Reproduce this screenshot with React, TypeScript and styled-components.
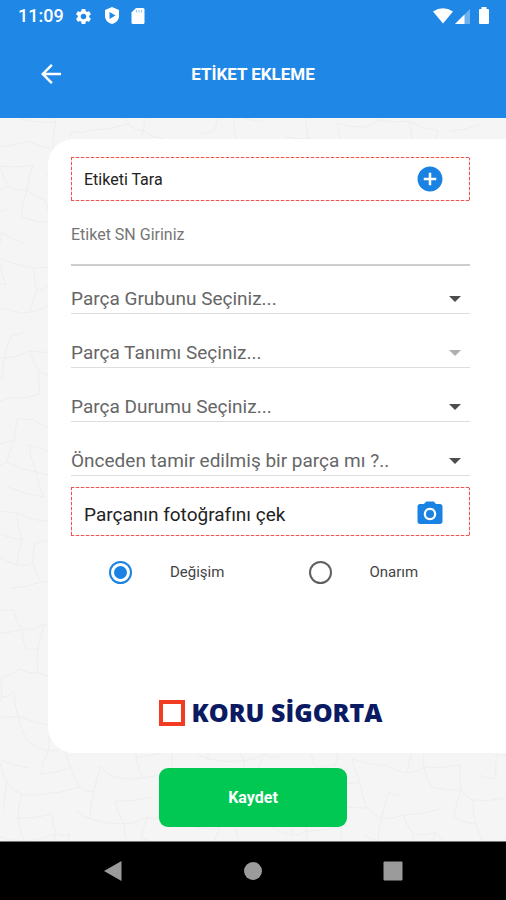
import React, { useState } from "react";
import styled, { createGlobalStyle } from "styled-components";
import { MdAddCircle, MdArrowBack, MdPhotoCamera, MdSettings } from "react-icons/md";

const GlobalStyle = createGlobalStyle`
  * { box-sizing: border-box; }
  body { margin: 0; background: #f5f5f5; }
  button, input, select { font-family: inherit; }
`;

const Screen = styled.div`
  min-height: 100vh;
  display: flex;
  flex-direction: column;
  font-family: Roboto, "Liberation Sans", sans-serif;
  background: #f5f5f5;
`;

const Header = styled.header`
  background: #1f87e6;
  color: #fff;
`;

const StatusBar = styled.div`
  display: flex;
  align-items: center;
  height: 32px;
  padding: 0 16px 0 18px;
`;

const Clock = styled.time`
  font-size: 18px;
  line-height: 24px;
  font-weight: 500;
  margin-right: 10px;
`;

const IconGroup = styled.div<{ $gap: number }>`
  display: flex;
  align-items: center;
  gap: ${(p) => p.$gap}px;
`;

const Spacer = styled.div`
  flex: 1;
`;

const AppBar = styled.div`
  display: grid;
  grid-template-columns: 1fr auto 1fr;
  align-items: center;
  height: 86px;
  padding: 0 36px 2px;
`;

const BackButton = styled.button`
  justify-self: start;
  display: flex;
  padding: 0;
  border: 0;
  background: none;
  color: inherit;
  cursor: pointer;
`;

const Title = styled.h1`
  margin: 0;
  font-size: 17px;
  line-height: 24px;
  font-weight: 700;
`;

const Main = styled.main`
  position: relative;
  flex: 1;
  display: flex;
  flex-direction: column;
  padding: 21px 0 14px;
`;

const Texture = styled.svg`
  position: absolute;
  inset: 0;
  width: 100%;
  height: 100%;
`;

const Card = styled.form`
  position: relative;
  flex: 1;
  display: flex;
  flex-direction: column;
  margin-left: 48px;
  padding: 18px 36px 27px 23px;
  border-radius: 26px 0 0 26px;
  background: #fff;
`;

const dash = "#f0524d 0 3px, #fbd0ce 3px 5px";

const ActionBox = styled.button<{ $tall?: boolean }>`
  display: flex;
  align-items: center;
  justify-content: space-between;
  width: 100%;
  height: ${(p) => (p.$tall ? 49 : 44)}px;
  padding: ${(p) => (p.$tall ? 5 : 0)}px 25px 0 13px;
  border: 0;
  background:
    repeating-linear-gradient(90deg, ${dash}) top / 100% 1px no-repeat,
    repeating-linear-gradient(90deg, ${dash}) bottom / 100% 1px no-repeat,
    repeating-linear-gradient(180deg, ${dash}) left / 1px 100% no-repeat,
    repeating-linear-gradient(180deg, ${dash}) right / 1px 100% no-repeat,
    #fff;
  color: #222;
  font-size: ${(p) => (p.$tall ? 19 : 16)}px;
  cursor: pointer;

  svg {
    color: #1a82e2;
  }
`;

const SerialInput = styled.input`
  width: 100%;
  height: 45px;
  margin-top: 20px;
  padding: 0 0 16px;
  border: 0;
  border-bottom: 2px solid #cdcdcd;
  border-radius: 0;
  outline: 0;
  background: none;
  color: #333;
  font-size: 16px;

  &::placeholder {
    color: #757575;
    opacity: 1;
  }
`;

const Fields = styled.div`
  display: flex;
  flex-direction: column;
  gap: 24px;
  margin: 18px 0 11px;
`;

const SelectField = styled.div`
  display: grid;
  align-items: center;
  height: 30px;
  border-bottom: 1px solid #dedede;

  > * {
    grid-area: 1 / 1;
  }
`;

const Select = styled.select`
  appearance: none;
  width: 100%;
  height: 29px;
  padding: 0 32px 0 0;
  border: 0;
  outline: 0;
  background: none;
  color: #666;
  font-size: 19px;
  opacity: 1;
`;

const Caret = styled.svg<{ $dim?: boolean }>`
  justify-self: end;
  margin-right: 9px;
  fill: ${(p) => (p.$dim ? "#b0b0b0" : "#4d4d4d")};
  pointer-events: none;
`;

const Choices = styled.fieldset`
  display: grid;
  grid-template-columns: 1fr 1fr;
  margin: 24px 0 48px;
  padding: 0;
  border: 0;
`;

const Choice = styled.label`
  display: flex;
  align-items: center;
  gap: 38px;
  padding-left: 38px;
  color: #444;
  font-size: 15px;
  line-height: 24px;
  cursor: pointer;
`;

const Radio = styled.input`
  appearance: none;
  display: grid;
  place-items: center;
  width: 23px;
  height: 23px;
  margin: 0;
  border: 2px solid #606060;
  border-radius: 50%;

  &:checked {
    border-color: #1a82e2;
  }

  &:checked::before {
    content: "";
    width: 13px;
    height: 13px;
    border-radius: 50%;
    background: #1a82e2;
  }
`;

const Brand = styled.div`
  display: flex;
  align-items: center;
  justify-content: center;
  gap: 7px;
  margin-top: auto;
  color: #0a1a63;
  font-family: "Open Sans", "Noto Sans", sans-serif;
  font-size: 25px;
  line-height: 27px;
  font-weight: 800;
  white-space: nowrap;
`;

const BrandMark = styled.span`
  width: 26px;
  height: 26px;
  border: 4px solid #f23c22;
`;

const SaveButton = styled.button`
  position: relative;
  align-self: center;
  width: 37%;
  height: 59px;
  margin-top: 15px;
  border: 0;
  border-radius: 9px;
  background: #00c853;
  color: #fff;
  font-size: 16px;
  font-weight: 700;
  cursor: pointer;
`;

const NavBar = styled.nav`
  display: flex;
  justify-content: space-around;
  align-items: center;
  height: 59px;
  padding: 0 43px;
  border-top: 1px solid #777;
  background: #000;
`;

const NavButton = styled.button`
  display: flex;
  padding: 4px;
  border: 0;
  background: none;
  cursor: pointer;

  svg {
    fill: #9b9b9b;
  }
`;

const meshPoint = (r: number, c: number): [number, number] => {
  const y = r * 23 + Math.sin(c * 1.7 + r * 0.6) * 6 + c * 1.5 - 20;
  const x = c * 24 + Math.sin(r * 1.3 + c * 2.1) * 7 + r * 0.8 - 24;
  return [Math.round(x), Math.round(y)];
};

const meshPath = () => {
  let d = "";
  for (let r = 0; r < 34; r++) {
    for (let c = 0; c < 24; c++) {
      const [x, y] = meshPoint(r, c);
      const [rx, ry] = meshPoint(r, c + 1);
      const [dx, dy] = meshPoint(r + 1, c);
      if ((r * 5 + c * 3) % 7 > 1) {
        d += `M${x} ${y}Q${(x + rx) / 2} ${(y + ry) / 2 + 3} ${rx} ${ry}`;
      }
      if ((r * 3 + c * 5) % 4 > 1) {
        d += `M${x} ${y}Q${(x + dx) / 2 - 2} ${(y + dy) / 2} ${dx} ${dy}`;
      }
    }
  }
  return d;
};

const mesh = meshPath();

const selects = [
  { id: "group", text: "Parça Grubunu Seçiniz..." },
  { id: "definition", text: "Parça Tanımı Seçiniz...", disabled: true },
  { id: "condition", text: "Parça Durumu Seçiniz..." },
  { id: "repaired", text: "Önceden tamir edilmiş bir parça mı ?.." },
];

const choices = ["Değişim", "Onarım"];

export default function App() {
  const [choice, setChoice] = useState(choices[0]);

  return (
    <Screen>
      <GlobalStyle />
      <Header>
        <StatusBar>
          <Clock>11:09</Clock>
          <IconGroup $gap={11}>
            <MdSettings size={19} />
            <svg width="16" height="18" viewBox="0 0 16 18" fill="#fff" fillRule="evenodd">
              <path d="M8 0 15 3V9C15 13 12 16 8 17 4 16 1 13 1 9V3ZM5.500 5V12L11.500 8.500Z" />
            </svg>
            <svg width="14" height="16" viewBox="0 0 14 16" fill="#fff">
              <path d="M5 0H12Q13.500 0 13.500 1.500V14.500Q13.500 16 12 16H2Q.5 16 .5 14.500V4.500Z" />
              <path d="M5.500 2V4.500M8 2V4.500M10.500 2V4.500" stroke="#1f87e6" strokeOpacity=".5" />
            </svg>
          </IconGroup>
          <Spacer />
          <svg width="20" height="16" viewBox="0 0 20 16" fill="#fff">
            <path d="M0 3.500Q10-3 20 3.500L10 15.500Z" />
          </svg>
          <IconGroup $gap={8}>
            <svg width="17" height="16" viewBox="0 0 17 16" fill="#fff">
              <path d="M17 1V16H2Z" opacity=".35" />
              <path d="M11.500 6.500V16H2Z" />
            </svg>
            <svg width="12" height="18" viewBox="0 0 12 18" fill="#fff">
              <path d="M3.500 0H8.500V2H10Q11 2 11 3V16Q11 17 10 17H2Q1 17 1 16V3Q1 2 2 2H3.500Z" />
            </svg>
          </IconGroup>
        </StatusBar>
        <AppBar>
          <BackButton type="button" aria-label="Geri">
            <MdArrowBack size={30} />
          </BackButton>
          <Title>ETİKET EKLEME</Title>
        </AppBar>
      </Header>

      <Main>
        <Texture viewBox="0 0 506 723" preserveAspectRatio="xMidYMid slice" aria-hidden="true">
          <path d={mesh} fill="none" stroke="#eeeeee" />
        </Texture>
        <Card id="label-form" onSubmit={(e) => e.preventDefault()}>
          <ActionBox type="button">
            Etiketi Tara
            <MdAddCircle size={30} />
          </ActionBox>
          <SerialInput aria-label="Etiket SN" placeholder="Etiket SN Giriniz" />
          <Fields>
            {selects.map((s) => (
              <SelectField key={s.id}>
                <Select aria-label={s.text} disabled={s.disabled}>
                  <option>{s.text}</option>
                </Select>
                <Caret $dim={s.disabled} width="12" height="6" viewBox="0 0 12 6">
                  <path d="M0 0H12L6 6Z" />
                </Caret>
              </SelectField>
            ))}
          </Fields>
          <ActionBox type="button" $tall>
            Parçanın fotoğrafını çek
            <MdPhotoCamera size={30} />
          </ActionBox>
          <Choices aria-label="İşlem">
            {choices.map((c) => (
              <Choice key={c}>
                <Radio type="radio" name="operation" checked={choice === c} onChange={() => setChoice(c)} />
                {c}
              </Choice>
            ))}
          </Choices>
          <Brand>
            <BrandMark />
            KORU SİGORTA
          </Brand>
        </Card>
        <SaveButton type="submit" form="label-form">
          Kaydet
        </SaveButton>
      </Main>

      <NavBar>
        <NavButton aria-label="Geri">
          <svg width="20" height="20" viewBox="0 0 20 20">
            <path d="M18.500 0V20L1 10Z" />
          </svg>
        </NavButton>
        <NavButton aria-label="Ana ekran">
          <svg width="20" height="20" viewBox="0 0 20 20">
            <circle cx="10" cy="10" r="9" />
          </svg>
        </NavButton>
        <NavButton aria-label="Son uygulamalar">
          <svg width="20" height="20" viewBox="0 0 20 20">
            <rect x=".5" y=".5" width="19" height="19" rx="1" />
          </svg>
        </NavButton>
      </NavBar>
    </Screen>
  );
}
